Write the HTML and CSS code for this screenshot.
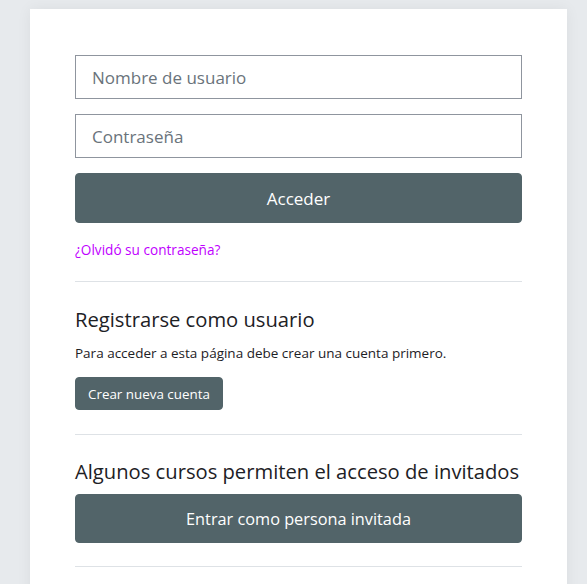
FILE: index.html
```html
<!DOCTYPE html>
<html lang="es">
<head>
<meta charset="utf-8">
<title>Acceder</title>
<link rel="stylesheet" href="styles.css">
</head>
<body>
<div class="page">
  <main class="card">
    <form class="login-form">
      <input class="field" type="text" placeholder="Nombre de usuario">
      <input class="field" type="password" placeholder="Contraseña">
      <button class="btn btn-lg" type="button">Acceder</button>
    </form>
    <a class="forgot" href="#">¿Olvidó su contraseña?</a>
    <hr class="divider">
    <section class="signup">
      <h2 class="heading">Registrarse como usuario</h2>
      <p class="note">Para acceder a esta página debe crear una cuenta primero.</p>
      <button class="btn btn-sm" type="button">Crear nueva cuenta</button>
    </section>
    <hr class="divider">
    <section class="guest">
      <h2 class="heading">Algunos cursos permiten el acceso de invitados</h2>
      <button class="btn btn-lg guest-btn" type="button">Entrar como persona invitada</button>
    </section>
    <hr class="divider">
  </main>
</div>
</body>
</html>
```
FILE: styles.css
```css
* { box-sizing: border-box; }
html, body { margin: 0; padding: 0; }
body {
  background: #e7eaed;
  font-family: "Open Sans", "Noto Sans", sans-serif;
  color: #1d2125;
  height: 584px;
  overflow: hidden;
}
.page {
  padding: 9px 20px 0 30px;
}
.card {
  width: 537px;
  min-height: 600px;
  background: #fff;
  box-shadow: 0 0 14px rgba(0,0,0,0.06);
  padding: 46px 45px 0 45px;
}
.login-form {
  display: flex;
  flex-direction: column;
  gap: 15px;
}
.field {
  width: 447px;
  height: 44px;
  border: 1px solid #8f959e;
  border-radius: 0;
  padding: 0 16px;
  font-family: inherit;
  font-size: 17px;
  color: #495057;
  outline: none;
}
.field::placeholder { color: #6a737b; }
.btn {
  background: #526469;
  color: #fff;
  border: 1px solid #526469;
  border-radius: 4px;
  font-family: inherit;
  cursor: pointer;
}
.btn-lg {
  width: 447px;
  height: 50px;
  font-size: 17px;
}
.btn-sm {
  height: 33px;
  padding: 0 12px 0 12px;
  font-size: 13.4px;
}
.forgot {
  display: block;
  margin-top: 17px;
  font-size: 13.6px;
  line-height: 20px;
  color: #bf00ff;
  text-decoration: none;
}
.divider {
  width: 447px;
  margin: 21px 0 0 0;
  border: 0;
  border-top: 1px solid #dee2e6;
}
.heading {
  margin: 0;
  font-weight: 400;
  font-size: 20.2px;
  line-height: 28px;
}
.signup { padding-top: 23px; }
.signup .heading { margin-bottom: 10px; }
.note {
  margin: 0 0 14px 0;
  font-size: 13.5px;
  line-height: 20px;
}
.guest { padding-top: 22px; }
.guest-btn { margin-top: 9px; height: 49px; font-size: 16.3px; }
.guest + .divider { margin-top: 23px; }
.signup + .divider { margin-top: 24px; }
```
